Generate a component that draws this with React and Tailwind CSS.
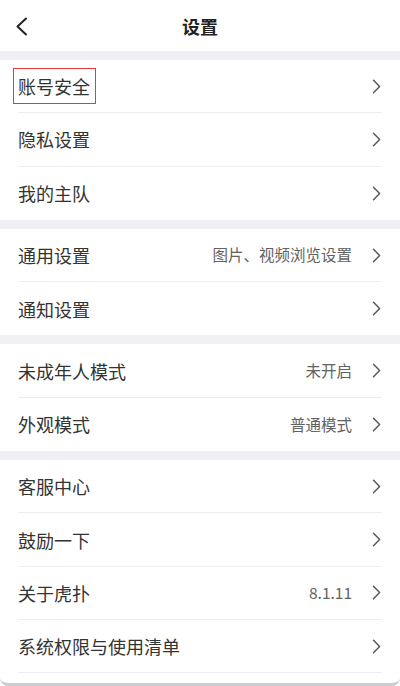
import React from "react";

const groups = [
  [{ label: "账号安全", marked: true }, { label: "隐私设置" }, { label: "我的主队" }],
  [{ label: "通用设置", value: "图片、视频浏览设置" }, { label: "通知设置" }],
  [
    { label: "未成年人模式", value: "未开启" },
    { label: "外观模式", value: "普通模式" },
  ],
  [
    { label: "客服中心" },
    { label: "鼓励一下" },
    { label: "关于虎扑", value: "8.1.11" },
    { label: "系统权限与使用清单" },
  ],
];

const Chevron = () => (
  <svg width="9" height="15" viewBox="0 0 9 15" fill="none" className="shrink-0">
    <path d="M1.5 1.2L7.6 7.5L1.5 13.8" stroke="#555a62" strokeWidth="1.5" strokeLinecap="round" strokeLinejoin="round" />
  </svg>
);

const Row = ({ item, last, lineAfter }) => {
  const line = !last || lineAfter;
  return (
    <div className="bg-white">
      <div className={(line ? "h-[52.3px]" : "h-[53.3px]") + " flex items-center pl-[18px] pr-[19px]"}>
        <span
          className={
            item.marked
              ? "text-[18px] text-[#333] leading-none -ml-[5px] pl-[4px] pr-[5px] py-[8px] border-[1.5px] border-[#e5393b]"
              : "text-[18px] text-[#333] leading-none"
          }
        >
          {item.label}
        </span>
        <div className="flex-1" />
        {item.value && (
          <span className="text-[15.5px] text-[#626262] mr-[20px] leading-none">{item.value}</span>
        )}
        <Chevron />
      </div>
      {line && <div className="mx-[18px] h-px bg-[#ededf1]" />}
    </div>
  );
};

export default function App() {
  return (
    <div
      className="w-[400px] h-[686px] overflow-hidden bg-white rounded-b-[8px] border-b-[3px] border-[#c9cdd3]"
      style={{ fontFamily: '"Noto Sans CJK SC", "Noto Sans", sans-serif' }}
    >
      <div className="h-[51px] flex items-center justify-center relative bg-white">
        <svg width="14" height="20" viewBox="0 0 14 20" fill="none" className="absolute left-[15px] top-[17px]">
          <path d="M11 1.5L2.5 9.5L11 17.5" stroke="#222" strokeWidth="2" strokeLinecap="round" strokeLinejoin="round" />
        </svg>
        <span className="text-[18px] font-bold text-[#222] leading-none">设置</span>
      </div>
      {groups.map((g, gi) => (
        <div key={gi}>
          <div className="h-[9px] bg-[#f0f0f4]" />
          {g.map((item, i) => (
            <Row key={item.label} item={item} last={i === g.length - 1} lineAfter={gi === groups.length - 1} />
          ))}
        </div>
      ))}
    </div>
  );
}
